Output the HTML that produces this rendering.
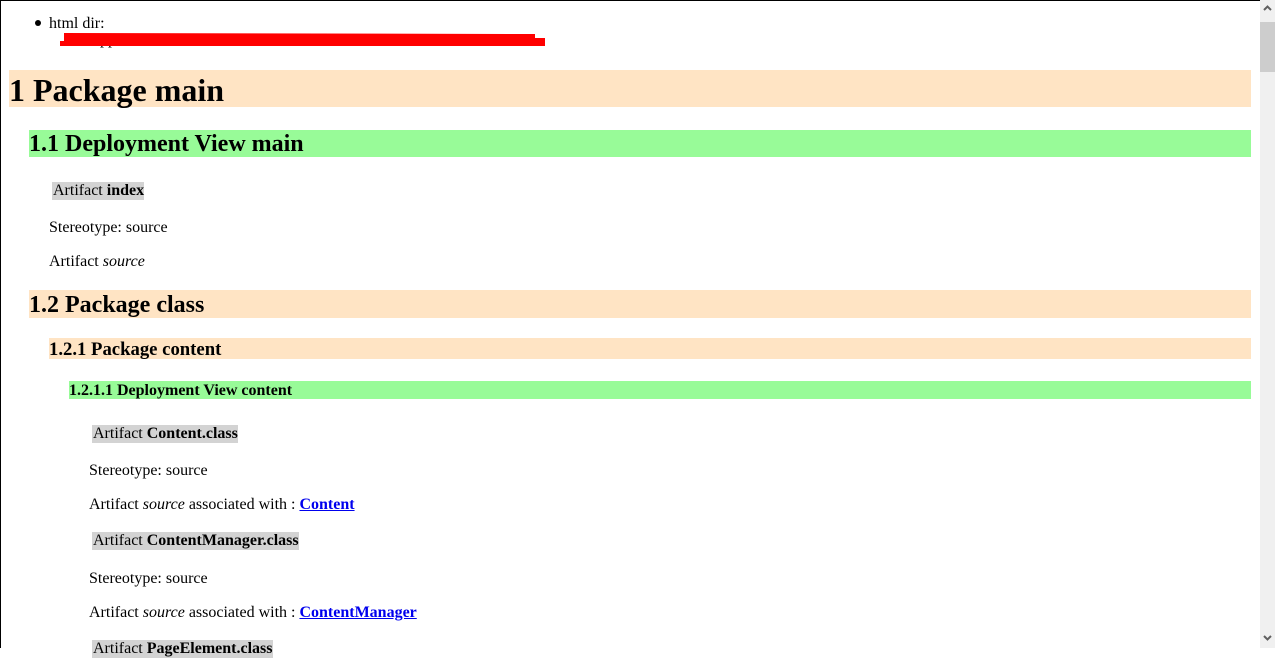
<!DOCTYPE html>
<html><head><meta charset="utf-8"><style>
html,body{margin:0;padding:0;}
body{width:1275px;height:648px;overflow:hidden;position:relative;background:#fff;font-family:"Liberation Serif",serif;color:#000;font-size:16px;}
.a{position:absolute;white-space:nowrap;line-height:18px;}
.bg{position:absolute;font-weight:bold;white-space:nowrap;}
.or{background:#ffe4c4;}
.gr{background:#98fb98;}
.lab{position:absolute;background:#d3d3d3;line-height:18px;white-space:nowrap;padding-left:1px;}
a{color:#0000ee;font-weight:bold;text-decoration:underline;}
</style></head><body>
<div style="position:absolute;left:0;top:0;width:1260px;height:1px;background:#000"></div>
<div style="position:absolute;left:0;top:0;width:1px;height:648px;background:#000"></div>

<div style="position:absolute;left:35px;top:20px;width:6px;height:6px;border-radius:50%;background:#000"></div>
<div class="a" style="left:49px;top:15px">html dir:</div>
<div class="a" style="left:100px;top:31px">pp</div>
<svg style="position:absolute;left:0;top:0" width="600" height="60"><polygon points="64,33 535,34 535,38 545,38 545,46 60,46 60,41 64,41" fill="#f00"/></svg>

<div class="bg or" style="left:9px;top:70px;width:1242px;height:37px;font-size:32px;line-height:41px">1 Package main</div>
<div class="bg gr" style="left:29px;top:130px;width:1222px;height:27px;font-size:24px;line-height:29px">1.1 Deployment View main</div>
<div class="lab" style="left:52px;top:182px">Artifact <b>index</b></div>
<div class="a" style="left:49px;top:219px">Stereotype: source</div>
<div class="a" style="left:49px;top:253px">Artifact <i>source</i></div>
<div class="bg or" style="left:29px;top:290px;width:1222px;height:28px;font-size:24px;line-height:30px">1.2 Package class</div>
<div class="bg or" style="left:49px;top:338px;width:1202px;height:21px;font-size:18.7px;line-height:23px">1.2.1 Package content</div>
<div class="bg gr" style="left:69px;top:381px;width:1182px;height:18px;font-size:16px;line-height:19px">1.2.1.1 Deployment View content</div>
<div class="lab" style="left:92px;top:425px">Artifact <b>Content.class</b></div>
<div class="a" style="left:89px;top:462px">Stereotype: source</div>
<div class="a" style="left:89px;top:496px">Artifact <i>source</i> associated with : <a>Content</a></div>
<div class="lab" style="left:92px;top:532px">Artifact <b>ContentManager.class</b></div>
<div class="a" style="left:89px;top:570px">Stereotype: source</div>
<div class="a" style="left:89px;top:604px">Artifact <i>source</i> associated with : <a>ContentManager</a></div>
<div class="lab" style="left:92px;top:640px">Artifact <b>PageElement.class</b></div>

<div style="position:absolute;left:1260px;top:0;width:15px;height:648px;background:#f0f0f0"></div>
<div style="position:absolute;left:1260px;top:22px;width:15px;height:50px;background:#cdcdcd"></div>
<svg style="position:absolute;left:1260px;top:0" width="15" height="648">
<polyline points="4,10 7.5,6.5 11,10" fill="none" stroke="#606060" stroke-width="2"/>
<polyline points="4,636 7.5,639.5 11,636" fill="none" stroke="#606060" stroke-width="2"/>
</svg>
</body></html>
